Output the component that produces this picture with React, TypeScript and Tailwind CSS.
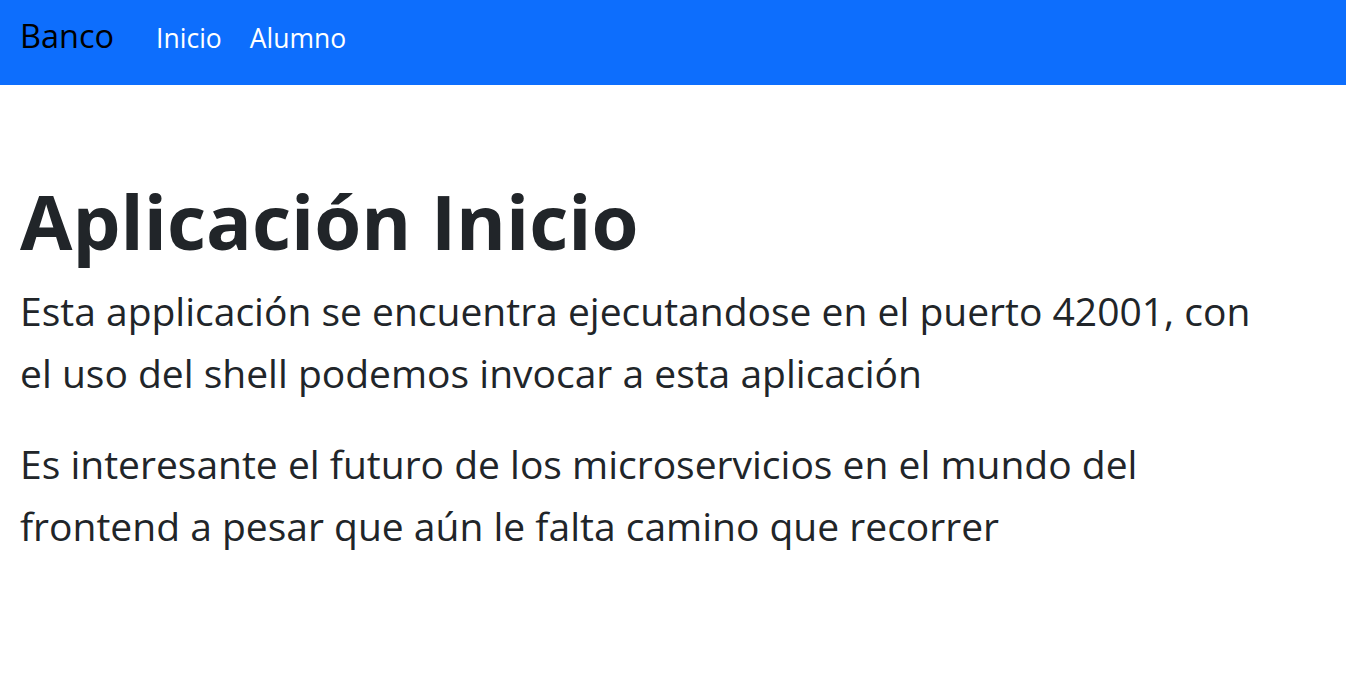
import React from 'react';

const links = ['Inicio', 'Alumno'];

const App = () => {
  return (
    <div className="min-h-screen bg-white font-['Open_Sans',sans-serif] text-[#212529]">
      <nav className="h-[85px] bg-[#0d6efd] flex items-baseline px-5 pt-[20px]">
        <a className="text-[32.5px] text-black mr-[42px] leading-none">Banco</a>
        <ul className="flex items-baseline gap-[28px]">
          {links.map((link) => (
            <li key={link} className="text-[26.5px] text-white leading-none">
              {link}
            </li>
          ))}
        </ul>
      </nav>
      <main className="px-5 pt-[90px] max-w-[1300px]">
        <h1 className="text-[76px] font-bold leading-[1.2] mb-[14px]">Aplicación Inicio</h1>
        <p className="text-[39px] leading-[62px] mb-[29px]">
          Esta applicación se encuentra ejecutandose en el puerto 42001, con el uso del shell podemos invocar a esta aplicación
        </p>
        <p className="text-[39px] leading-[62px]">
          Es interesante el futuro de los microservicios en el mundo del frontend a pesar que aún le falta camino que recorrer
        </p>
      </main>
    </div>
  );
};

export default App;
